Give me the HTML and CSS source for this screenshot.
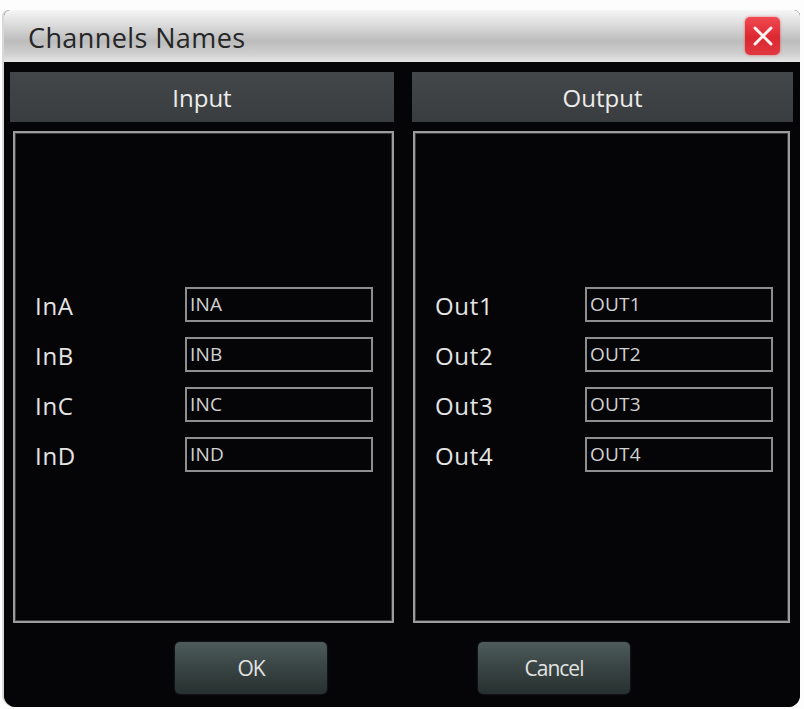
FILE: index.html
```html
<!DOCTYPE html>
<html>
<head>
<meta charset="utf-8">
<title>Channels Names</title>
<link rel="stylesheet" href="styles.css">
</head>
<body>
<div class="window">
  <div class="titlebar">
    <span class="title">Channels Names</span>
    <button class="close" aria-label="Close">
      <svg width="22" height="22" viewBox="0 0 22 22"><path d="M3 3 L19 19 M19 3 L3 19" stroke="#fff4f4" stroke-width="3" stroke-linecap="round"/></svg>
    </button>
  </div>
  <div class="body">
    <div class="columns">
      <section class="group">
        <div class="group-head">Input</div>
        <div class="panel">
          <div class="rows">
            <div class="row"><span class="label">InA</span><input class="field" value="INA"></div>
            <div class="row"><span class="label">InB</span><input class="field" value="INB"></div>
            <div class="row"><span class="label">InC</span><input class="field" value="INC"></div>
            <div class="row"><span class="label">InD</span><input class="field" value="IND"></div>
          </div>
        </div>
      </section>
      <section class="group right">
        <div class="group-head">Output</div>
        <div class="panel">
          <div class="rows">
            <div class="row"><span class="label">Out1</span><input class="field" value="OUT1"></div>
            <div class="row"><span class="label">Out2</span><input class="field" value="OUT2"></div>
            <div class="row"><span class="label">Out3</span><input class="field" value="OUT3"></div>
            <div class="row"><span class="label">Out4</span><input class="field" value="OUT4"></div>
          </div>
        </div>
      </section>
    </div>
    <div class="actions">
      <button class="btn">OK</button>
      <button class="btn">Cancel</button>
    </div>
  </div>
</div>
</body>
</html>
```

FILE: styles.css
```css
html, body {
  margin: 0;
  padding: 0;
  background: #fdfdfd;
}

body {
  font-family: "Open Sans", "Noto Sans", sans-serif;
  width: 804px;
  height: 709px;
  overflow: hidden;
}

.window {
  margin: 10px 4px 0 4px;
  width: 796px;
  height: 697px;
  display: flex;
  flex-direction: column;
  border-radius: 6px 6px 12px 12px;
  overflow: hidden;
  background: #050507;
  box-shadow: -2px 0 0 #d8d8d8;
}

.titlebar {
  height: 52px;
  flex: none;
  display: flex;
  align-items: center;
  justify-content: space-between;
  padding: 0 20px 0 24px;
  background: linear-gradient(#f6f6f6 0%, #dadada 30%, #bcbcbc 60%, #d0d0d0 85%, #e6e6e6 100%);
}

.title {
  font-size: 27px;
  color: #262626;
  letter-spacing: 0.4px;
  margin-top: 2px;
}

.close {
  width: 35px;
  height: 38px;
  border: none;
  border-radius: 5px;
  padding: 0;
  display: flex;
  align-items: center;
  justify-content: center;
  background: linear-gradient(#f04a52, #dc2830 55%, #e03840);
  box-shadow: 0 0 3px rgba(230, 40, 50, 0.6);
}

.body {
  flex: 1;
  display: flex;
  flex-direction: column;
  padding: 10px 6px 0 6px;
  background: #050508;
}

.columns {
  display: grid;
  grid-template-columns: 384px 381px;
  column-gap: 18px;
}

.group-head {
  height: 50px;
  display: flex;
  align-items: center;
  justify-content: center;
  background: linear-gradient(#44474a, #3a3d40);
  color: #ececec;
  font-size: 24px;
}

.panel {
  margin: 9px 0 0 3px;
  height: 488px;
  border: 2px solid #9c9c9c;
  box-shadow: inset 0 0 0 1px #3a3a3a;
  display: flex;
  align-items: center;
}

.right .panel {
  margin: 9px 3px 0 1px;
}

.rows {
  width: 100%;
  display: flex;
  flex-direction: column;
  gap: 15px;
  margin-top: 4px;
}

.row {
  display: flex;
  align-items: center;
  height: 35px;
  padding-left: 20px;
}

.label {
  width: 150px;
  color: #e4e4e4;
  font-size: 24px;
  letter-spacing: 0.7px;
  margin-top: 2px;
}

.field {
  box-sizing: border-box;
  width: 188px;
  height: 35px;
  margin: 0;
  padding: 0 0 0 3px;
  background: #050508;
  border: 2px solid #8e8e8e;
  color: #d2d2d2;
  font-family: "Open Sans", "Noto Sans", sans-serif;
  font-size: 19px;
  font-weight: 500;
  letter-spacing: 0.2px;
  outline: none;
}

.actions {
  display: flex;
  gap: 151px;
  padding: 19px 0 0 165px;
}

.btn {
  width: 152px;
  height: 52px;
  border: none;
  border-radius: 5px;
  background: linear-gradient(#4d5c5a 0%, #3a4645 45%, #26302f 100%);
  box-shadow: 0 0 2px rgba(120, 140, 140, 0.4);
  color: #e2e2e2;
  font-family: "Open Sans", "Noto Sans", sans-serif;
  font-size: 21px;
  letter-spacing: -1px;
  padding: 0;
}
```
